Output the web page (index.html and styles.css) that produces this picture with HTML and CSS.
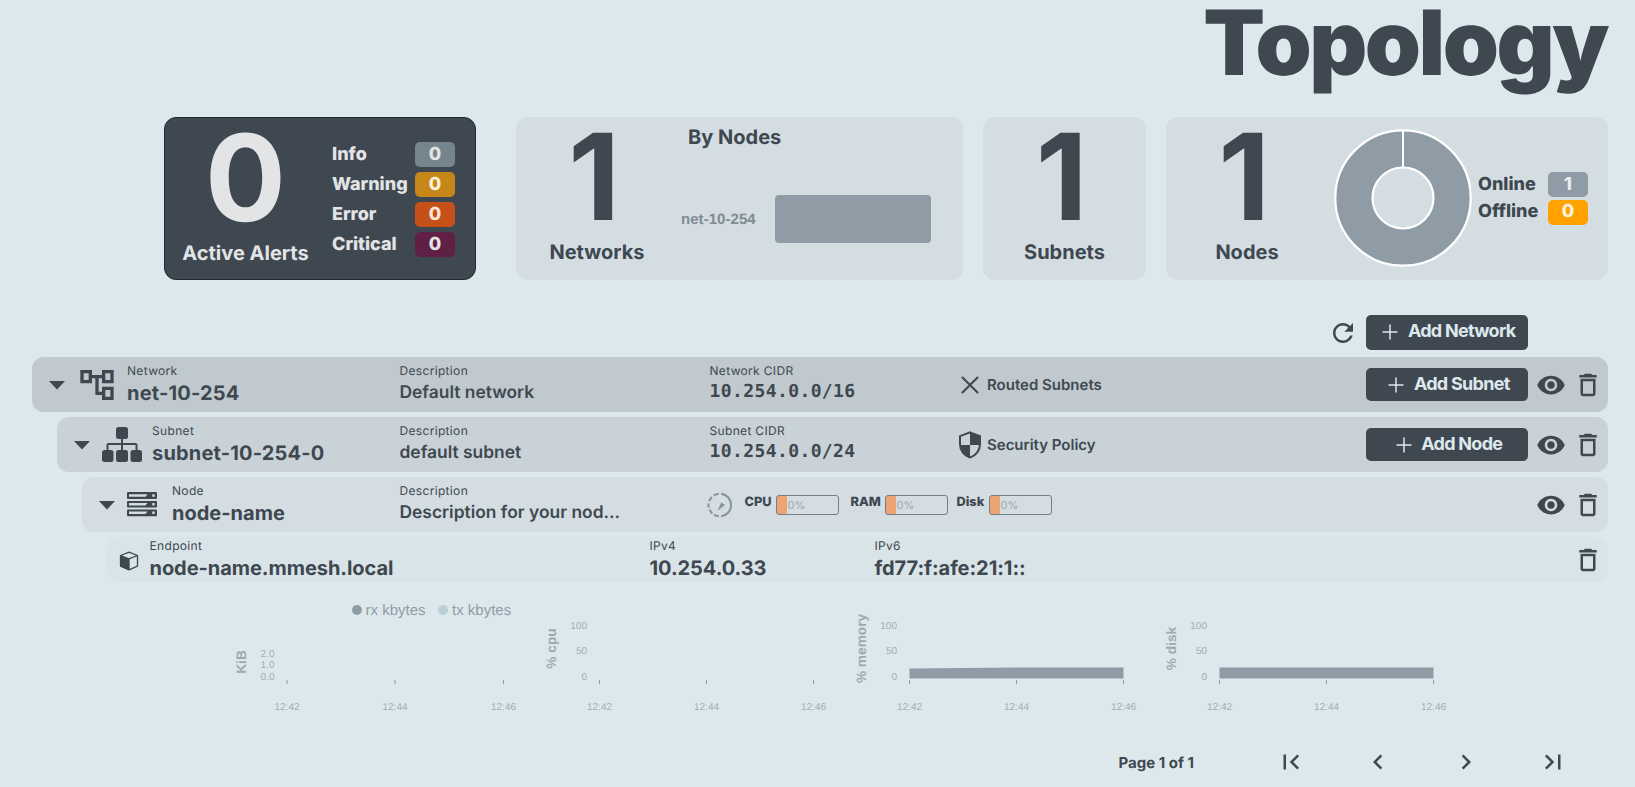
FILE: index.html
```html
<!DOCTYPE html>
<html lang="en">
<head>
<meta charset="utf-8">
<title>Topology</title>
<link rel="stylesheet" href="styles.css">
</head>
<body>
<svg class="defs" width="0" height="0" aria-hidden="true">
  <symbol id="eye" viewBox="0 0 24 24"><path d="M12 4.5C7 4.5 2.73 7.61 1 12c1.73 4.39 6 7.5 11 7.5s9.270-3.110 11-7.500c-1.730-4.390-6-7.500-11-7.500zM12 17c-2.760 0-5-2.240-5-5s2.240-5 5-5 5 2.240 5 5-2.240 5-5 5zm0-8c-1.660 0-3 1.340-3 3s1.340 3 3 3 3-1.340 3-3-1.340-3-3-3z"/></symbol>
  <symbol id="trash" viewBox="0 0 24 24"><path d="M6 19c0 1.1.9 2 2 2h8c1.1 0 2-.9 2-2V7H6v12zM8 9h8v10H8V9zm7.500-5l-1-1h-5l-1 1H5v2h14V4z"/></symbol>
  <symbol id="caret" viewBox="0 0 16 9"><path d="M0 0h16L8 8.500z"/></symbol>
  <symbol id="plus" viewBox="0 0 16 16"><path d="M8 .5v15M.5 8h15" fill="none" stroke="currentColor" stroke-width="1.500"/></symbol>
</svg>

<h1 class="title">Topology</h1>

<section class="cards">
  <div class="card card-alerts">
    <div class="stat stat-alerts"><span class="stat-value">0</span><span class="stat-label">Active Alerts</span></div>
    <div class="levels">
      <span>Info</span><b class="badge info">0</b>
      <span>Warning</span><b class="badge warning">0</b>
      <span>Error</span><b class="badge error">0</b>
      <span>Critical</span><b class="badge critical">0</b>
    </div>
  </div>
  <div class="card card-networks">
    <div class="stat stat-networks"><span class="stat-value">1</span><span class="stat-label">Networks</span></div>
    <div class="by-nodes">
      <h2>By Nodes</h2>
      <div class="bar-line"><span>net-10-254</span><i></i></div>
    </div>
  </div>
  <div class="card card-subnets">
    <div class="stat stat-subnets"><span class="stat-value">1</span><span class="stat-label">Subnets</span></div>
  </div>
  <div class="card card-nodes">
    <div class="stat stat-nodes"><span class="stat-value">1</span><span class="stat-label">Nodes</span></div>
    <svg class="donut" width="140" height="140" viewBox="-70 -70 140 140">
      <circle r="49.100" fill="none" stroke="#8f9ca5" stroke-width="37"/>
      <circle r="67.700" fill="none" stroke="#fff" stroke-width="2.200"/>
      <circle r="30.500" fill="none" stroke="#fff" stroke-width="2.200"/>
      <path d="M0-67.500V-30.500" stroke="#fff" stroke-width="2"/>
    </svg>
    <div class="levels levels-nodes">
      <span>Online</span><b class="badge online">1</b>
      <span>Offline</span><b class="badge offline">0</b>
    </div>
  </div>
</section>

<div class="toolbar">
  <svg width="30" height="30" viewBox="0 0 24 24"><path d="M17.650 6.350C16.200 4.900 14.210 4 12 4c-4.420 0-7.990 3.580-7.990 8s3.570 8 7.990 8c3.730 0 6.840-2.550 7.730-6h-2.080c-.82 2.330-3.040 4-5.650 4-3.310 0-6-2.690-6-6s2.690-6 6-6c1.660 0 3.140.69 4.220 1.780L13 11h7V4l-2.350 2.350z"/></svg>
  <button class="btn btn-tall"><svg width="16" height="16"><use href="#plus"/></svg>Add Network</button>
</div>

<main class="tree">
  <div class="row row-network">
    <svg class="caret" width="16" height="9"><use href="#caret"/></svg>
    <svg class="kind" width="40" height="40" viewBox="0 0 24 24"><path d="M22 11V3h-7v3H9V3H2v8h7V8h2v10h4v3h7v-8h-7v3h-2V8h2v3h7zM7 9H4V5h3v4zm10 6h3v4h-3v-4zm0-10h3v4h-3V5z"/></svg>
    <div class="field name"><small>Network</small><strong>net-10-254</strong></div>
    <div class="field desc"><small>Description</small><strong>Default network</strong></div>
    <div class="field cidr"><small>Network CIDR</small><strong>10.254.0.0/16</strong></div>
    <div class="flag"><svg width="24" height="28" viewBox="0 0 24 28"><path d="M4.500 6.500l15 15M19.500 6.500l-15 15" fill="none" stroke="currentColor" stroke-width="2.100" stroke-linecap="round"/></svg>Routed Subnets</div>
    <div class="actions"><button class="btn"><svg width="16" height="16"><use href="#plus"/></svg>Add Subnet</button><svg width="30" height="30"><use href="#eye"/></svg><svg width="30" height="30"><use href="#trash"/></svg></div>
  </div>
  <div class="row row-subnet">
    <svg class="caret" width="16" height="9"><use href="#caret"/></svg>
    <svg class="kind" width="40" height="36" viewBox="0 0 40 36"><g><rect x="14" y="0" width="12" height="12" rx="2.500"/><rect x="0" y="23" width="11.500" height="12" rx="2.500"/><rect x="14" y="23" width="12" height="12" rx="2.500"/><rect x="28.500" y="23" width="11.500" height="12" rx="2.500"/><path d="M20 11v13M5.500 24v-6q0-1 1-1h27q1 0 1 1v6" fill="none" stroke="currentColor" stroke-width="2"/></g></svg>
    <div class="field name"><small>Subnet</small><strong>subnet-10-254-0</strong></div>
    <div class="field desc"><small>Description</small><strong>default subnet</strong></div>
    <div class="field cidr"><small>Subnet CIDR</small><strong>10.254.0.0/24</strong></div>
    <div class="flag"><svg width="24" height="28" viewBox="0 0 24 28"><path d="M12 1.400L22 5.100v8.100c0 6-4 11.500-10 13.300C6 24.700 2 19.200 2 13.200V5.100z" fill="none" stroke="currentColor" stroke-width="2"/><path d="M12 1.400L22 5.100v9H12zM12 14v12.500C6 24.700 2 19.500 2 14z"/></svg>Security Policy</div>
    <div class="actions"><button class="btn"><svg width="16" height="16"><use href="#plus"/></svg>Add Node</button><svg width="30" height="30"><use href="#eye"/></svg><svg width="30" height="30"><use href="#trash"/></svg></div>
  </div>
  <div class="row row-node">
    <svg class="caret" width="16" height="9"><use href="#caret"/></svg>
    <svg class="kind" width="30" height="25" viewBox="0 0 30 25"><path fill-rule="evenodd" d="M1 0h28q1 0 1 1v5q0 1-1 1H1q-1 0-1-1V1q0-1 1-1zM2 2.200v2.600h16.500l2-2.600zM25.300 2.200v2.600h2.400V2.200zM1 9h28q1 0 1 1v4.500q0 1-1 1H1q-1 0-1-1V10q0-1 1-1zM2 11v2.500h16.500l2-2.500zM25.300 11v2.500h2.400V11zM1 17.500h28q1 0 1 1v4.700q0 1-1 1H1q-1 0-1-1v-4.700q0-1 1-1zM2 19.600v2.500h16.500l2-2.500zM25.300 19.600v2.500h2.400v-2.500z"/></svg>
    <div class="field name"><small>Node</small><strong>node-name</strong></div>
    <div class="field desc"><small>Description</small><strong>Description for your nod...</strong></div>
    <div class="meters">
      <svg width="26" height="26" viewBox="-13 -13 26 26"><g fill="none" stroke="#87939a" stroke-width="2"><path d="M1.200-11.300A11.400 11.400 0 0 1 1.200 11.300"/><path d="M-1.200-11.300A11.400 11.400 0 0 0-6.200-9.500M-8.100-8A11.400 11.400 0 0 0-10.700-3.900M-11.400-1.500A11.400 11.400 0 0 0-11.300 2.500M-10.400 4.700A11.400 11.400 0 0 0-7.700 8.400M-6 9.700A11.400 11.400 0 0 0-1.200 11.300"/></g><path d="M1.200-2.500L5 .1-2.500 5.800z" fill="#87939a"/></svg>
      <span class="meter cpu"><b>CPU</b><i>0%</i></span>
      <span class="meter ram"><b>RAM</b><i>0%</i></span>
      <span class="meter disk"><b>Disk</b><i>0%</i></span>
    </div>
    <div class="actions"><svg width="30" height="30"><use href="#eye"/></svg><svg width="30" height="30"><use href="#trash"/></svg></div>
  </div>
  <div class="row row-endpoint">
    <svg class="kind" width="20" height="20" viewBox="0 0 20 20"><path d="M10 1.200l8.500 3.300v10.600L10 18.800 1.500 15.100V4.500zM1.500 4.500L10 7.900l8.500-3.400M10 7.900v10.900" fill="none" stroke="currentColor" stroke-width="1.300" stroke-linejoin="round"/><path d="M1.200 4.500L10 8v11L1.200 15.200z"/></svg>
    <div class="field name"><small>Endpoint</small><strong>node-name.mmesh.local</strong></div>
    <div class="field ip4"><small>IPv4</small><strong>10.254.0.33</strong></div>
    <div class="field ip6"><small>IPv6</small><strong>fd77:f:afe:21:1::</strong></div>
    <div class="actions"><svg width="30" height="30"><use href="#trash"/></svg></div>
  </div>
</main>

<section class="charts">
  <svg class="chart" width="310" height="136" viewBox="220 590 310 136">
    <circle cx="357" cy="610" r="5" fill="#8f9ca5"/><text class="legend" x="365.500" y="615">rx kbytes</text>
    <circle cx="443" cy="610" r="5" fill="#bccfd6"/><text class="legend" x="452" y="615">tx kbytes</text>
    <text class="axis" transform="translate(246 662) rotate(-90)">KiB</text>
    <g class="y"><text x="274.500" y="657">2.0</text><text x="274.500" y="668">1.0</text><text x="274.500" y="680">0.0</text></g>
    <path class="tick" d="M287 680v4M395 680v4M503.500 680v4"/>
    <g class="x"><text x="287" y="710">12:42</text><text x="395" y="710">12:44</text><text x="503.500" y="710">12:46</text></g>
  </svg>
  <svg class="chart" width="310" height="136" viewBox="530 590 310 136">
    <text class="axis" transform="translate(556 648.500) rotate(-90)">% cpu</text>
    <g class="y"><text x="587" y="629">100</text><text x="587" y="654">50</text><text x="587" y="680">0</text></g>
    <path class="tick" d="M599.500 680v4M706.500 680v4M813.500 680v4"/>
    <g class="x"><text x="599.500" y="710">12:42</text><text x="706.500" y="710">12:44</text><text x="813.500" y="710">12:46</text></g>
  </svg>
  <svg class="chart" width="310" height="136" viewBox="530 590 310 136">
    <text class="axis" transform="translate(556 648.500) rotate(-90)">% memory</text>
    <g class="y"><text x="587" y="629">100</text><text x="587" y="654">50</text><text x="587" y="680">0</text></g>
    <path class="area" d="M599.500 678.500v-10l107-.9h107v10.900z"/>
    <path class="tick" d="M599.500 680v4M706.500 680v4M813.500 680v4"/>
    <g class="x"><text x="599.500" y="710">12:42</text><text x="706.500" y="710">12:44</text><text x="813.500" y="710">12:46</text></g>
  </svg>
  <svg class="chart" width="310" height="136" viewBox="530 590 310 136">
    <text class="axis" transform="translate(556 648.500) rotate(-90)">% disk</text>
    <g class="y"><text x="587" y="629">100</text><text x="587" y="654">50</text><text x="587" y="680">0</text></g>
    <path class="area" d="M599.500 678.500v-10.900h214v10.900z"/>
    <path class="tick" d="M599.500 680v4M706.500 680v4M813.500 680v4"/>
    <g class="x"><text x="599.500" y="710">12:42</text><text x="706.500" y="710">12:44</text><text x="813.500" y="710">12:46</text></g>
  </svg>
</section>

<footer class="pager">
  <span>Page 1 of 1</span>
  <svg width="30" height="30" viewBox="0 0 24 24"><path d="M18.410 16.590L13.820 12l4.590-4.590L17 6l-6 6 6 6zM6 6h2v12H6z"/></svg>
  <svg width="30" height="30" viewBox="0 0 24 24"><path d="M15.410 7.410L14 6l-6 6 6 6 1.410-1.410L10.830 12z"/></svg>
  <svg width="30" height="30" viewBox="0 0 24 24"><path d="M10 6L8.590 7.410 13.170 12l-4.580 4.590L10 18l6-6z"/></svg>
  <svg width="30" height="30" viewBox="0 0 24 24"><path d="M5.590 7.410L10.180 12l-4.590 4.590L7 18l6-6-6-6zM16 6h2v12h-2z"/></svg>
</footer>
</body>
</html>
```
FILE: styles.css
```css
* { box-sizing: border-box; }
html { background: #dde8ed; }
body {
  margin: 0;
  width: 1635px;
  height: 787px;
  overflow: hidden;
  background: #dde8ed;
  color: #3f4850;
  font-family: Inter, "Open Sans", sans-serif;
  text-rendering: geometricPrecision;
}
.defs { display: block; position: absolute; }
svg { display: block; flex: none; fill: currentColor; overflow: visible; }
.title {
  margin: 0;
  padding-right: 28px;
  height: 117px;
  font-size: 90px;
  line-height: 86px;
  font-weight: 900;
  letter-spacing: -2.5px;
  text-align: right;
}

.cards { display: flex; padding-left: 164px; height: 163px; }
.card { display: flex; border-radius: 12px; background: #d3dde2; height: 163px; }
.card-alerts { width: 312px; margin-right: 40px; background: #3f4850; border: 1px solid #1f2a33; color: #e2e4e6; }
.card-networks { width: 447px; margin-right: 20px; }
.card-subnets { width: 163px; margin-right: 20px; justify-content: center; }
.card-nodes { width: 442px; }
.stat { display: flex; flex-direction: column; align-items: center; flex: none; }
.stat-value { font-size: 120px; line-height: 120px; font-weight: 700; height: 122px; padding-right: 6px; }
.stat-label { font-size: 20px; line-height: 26px; font-weight: 700; white-space: nowrap; }
.card-alerts .stat-value { height: 122px; padding-right: 0; }
.stat-alerts { width: 161px; }
.stat-networks { width: 162px; }
.stat-nodes { width: 162px; }
.levels {
  display: grid;
  grid-template-columns: 83px 40px;
  grid-auto-rows: 25px;
  row-gap: 5px;
  margin: 24px 0 0 6px;
  align-content: start;
  font-size: 18px;
  line-height: 26px;
  font-weight: 800;
}
.badge { border-radius: 5px; text-align: center; font-weight: 800; }
.info { background: #76848c; }
.warning { background: #c68718; color: #fbf0dc; }
.error { background: #c55118; color: #fae5dc; }
.critical { background: #602046; }
.online { background: #8f9ca5; color: #e9edef; }
.offline { background: #ffa200; color: #fff3dc; }
.levels-nodes { grid-template-columns: 70px 40px; margin: 55px 0 0 5px; row-gap: 3px; }
.levels-nodes > :nth-child(n+3) { line-height: 24px; }
.donut { margin: 11px 0 0 5px; }
.by-nodes { padding: 8px 0 0 3px; }
.by-nodes h2 { margin: 0 0 0 7px; font-size: 20px; line-height: 25px; font-weight: 700; }
.bar-line {
  display: flex;
  align-items: center;
  margin-top: 45px;
  height: 48px;
  color: #7f8c92;
  font: bold 15px "Liberation Sans", Arial, sans-serif;
}
.bar-line span { width: 93.500px; letter-spacing: .05px; }
.bar-line i { width: 156.500px; height: 48px; border-radius: 4px; background: #8f9ca5; }

.toolbar { display: flex; align-items: center; justify-content: flex-end; gap: 8px; margin-top: 35px; padding-right: 107px; height: 35px; }
.btn {
  display: flex;
  align-items: center;
  justify-content: center;
  gap: 9.500px;
  flex: none;
  width: 162px;
  height: 33px;
  padding: 0 0 2px 4px;
  border: 0;
  border-radius: 5px;
  background: #3f4850;
  color: #dde8ed;
  font: 700 18px/24px Inter, sans-serif;
  letter-spacing: -.72px;
}
.btn svg { position: relative; top: 1px; }
.btn-tall { height: 35px; padding-bottom: 4px; }

.tree { display: flex; flex-direction: column; gap: 5px; margin-top: 7px; padding-right: 27px; align-items: flex-end; }
.row { display: flex; height: 55px; border-radius: 12px; padding-right: 5px; }
.row-network { width: 1576px; padding-left: 17px; background: #bfc9ce; }
.row-subnet { width: 1551px; padding-left: 17px; background: #c8d2d7; }
.row-node { width: 1526px; padding-left: 17px; background: #d3dde2; }
.row-endpoint { width: 1501px; padding-left: 12px; height: 45px; background: #d9e4e9; }
.caret { margin-top: 24px; }
.row-network .kind { margin: 8px 10px 0 12px; }
.row-subnet .kind { margin: 10px 10px 0 12px; }
.row-node .kind { margin: 15px 15px 0 12px; }
.row-endpoint .kind { margin: 14px 10.500px 0 0; }
.field { display: flex; flex-direction: column; flex: none; padding-top: 5px; white-space: nowrap; }
.row-endpoint .field { padding-top: 0; }
.field small { font-size: 12px; line-height: 18px; letter-spacing: .33px; }
.field strong { font-size: 20px; line-height: 27px; font-weight: 700; }
.row-network .name strong, .row-subnet .name strong { letter-spacing: .18px; }
.row-endpoint .field strong { letter-spacing: -.05px; }
.row-network .name { width: 272.500px; }
.row-subnet .name { width: 247.500px; }
.row-node .name { width: 227.500px; }
.row-endpoint .name { width: 500px; }
.field.desc { width: 310px; }
.field.desc strong { font-size: 17.400px; line-height: 25px; font-weight: 600; }
.field.cidr { width: 248.500px; }
.field.cidr strong { font-family: "DejaVu Sans Mono", monospace; font-size: 18px; line-height: 24px; letter-spacing: .4px; }
.ip4 { width: 225px; }
.flag { display: flex; align-items: center; gap: 5px; font-size: 15px; font-weight: 600; height: 55px; }
.actions { display: flex; align-items: center; gap: 7px; margin-left: auto; height: 100%; }
.actions .btn { margin-right: 1px; }
.meters { display: flex; align-items: center; margin-left: -3px; height: 55px; }
.meter { display: flex; align-items: center; flex: none; }
.meter b { padding-bottom: 3px; font-size: 12.800px; line-height: 18px; font-weight: 800; }
.cpu { margin-left: 12px; }
.cpu b { width: 31px; }
.ram { margin-left: 12px; }
.ram b { width: 34px; }
.disk { margin-left: 9px; }
.disk b { width: 32px; }
.meter i {
  width: 63px;
  height: 20px;
  border: 1px solid #737f86;
  border-radius: 3px;
  padding-left: 11px;
  background: linear-gradient(to right, #eda472 10px, transparent 10px);
  color: #9ca6aa;
  font: 400 11px/19px Inter, sans-serif;
}

.charts { display: flex; margin: 8px 0 0 220px; }
.chart text { font-family: "Liberation Sans", Arial, sans-serif; font-size: 10px; fill: #a1adb3; }
.chart .legend { font-size: 15px; fill: #8f9ca5; }
.chart .axis { font-size: 13.700px; font-weight: bold; fill: #9caab0; text-anchor: middle; }
.chart .y text { text-anchor: end; }
.chart .x text { text-anchor: middle; }
.tick { stroke: #8f9ca5; stroke-width: 1; }
.area { fill: #8f9ca5; }

.pager { display: flex; align-items: center; justify-content: flex-end; gap: 57.500px; margin-top: 21px; padding-right: 67px; height: 30px; font-size: 15px; font-weight: 700; }
.pager span { margin-right: 24px; }
```
